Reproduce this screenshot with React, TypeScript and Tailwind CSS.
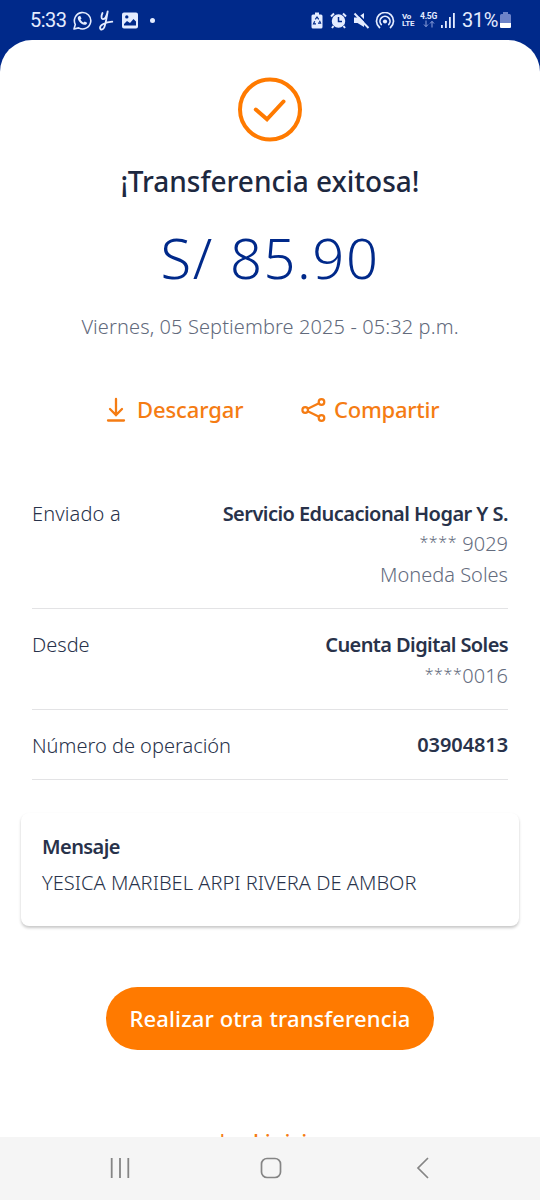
import type { ReactNode } from 'react';

function StatusBar() {
  return (
    <div className="flex h-10 shrink-0 items-center justify-between pl-[30px] pr-[29px] font-['Roboto',sans-serif] text-[#e4ecff]">
      <div className="flex items-center">
        <span className="w-[37px] whitespace-nowrap text-[20px] leading-6 tracking-[-0.5px]">5:33</span>
        <svg className="ml-[6px]" width="19" height="19" viewBox="0 0 19 19" fill="none" stroke="currentColor" strokeWidth="1.6">
          <path d="M1 18l1.3-4.5A8.2 8.2 0 1 1 5.6 16.900L1 18Z" strokeLinejoin="round" />
          <path d="M5.700 5.200l1.500-.4 1.300 2.600-1 1.200c.8 1.500 1.500 2.200 3 3l1.300-1 2.300 1.200c-.2 1.700-1.400 2.300-2.800 2-3.200-.7-6-3.500-6.500-6.400-.1-.8.200-1.700.9-2.200Z" fill="currentColor" stroke="none" />
        </svg>
        <svg className="ml-[6px]" width="16" height="21" viewBox="0 0 16 21" fill="none" stroke="currentColor" strokeWidth="1.800" strokeLinecap="round" strokeLinejoin="round">
          <path d="M4.500 3c-1.200 2.500-1.500 6 .2 6.200 2 .2 4-3.500 5-7.700C8.700 7 8 13 6.200 17.500 5.200 20 2.200 20.200 2 18c-.2-2.700 5-5.800 12.300-6.300" />
        </svg>
        <svg className="ml-[8px]" width="16" height="17" viewBox="0 0 16 17">
          <path fill="currentColor" fillRule="evenodd" d="M2 .5h12a2 2 0 0 1 2 2v12a2 2 0 0 1-2 2H2a2 2 0 0 1-2-2v-12a2 2 0 0 1 2-2Zm2.800 2.700a1.700 1.700 0 1 0 0 3.400 1.700 1.700 0 0 0 0-3.400ZM2 13.500h12v-4L11.500 7 8 11 5 9l-3 3Z" />
        </svg>
        <span className="ml-[12px] size-[5px] rounded-full bg-current" />
      </div>
      <div className="flex items-center">
        <svg width="12" height="17" viewBox="0 0 12 17">
          <path fill="currentColor" d="M4 .5h4v2h2a1.500 1.500 0 0 1 1.500 1.500v11a1.500 1.500 0 0 1-1.500 1.500H2A1.500 1.500 0 0 1 .5 15V4A1.500 1.500 0 0 1 2 2.500h2Z" />
          <path d="M4.300 7.300 6 5l1.700 2.300M8.500 8.800l1 2.300H7M5 11.800H2.500l1.200-2.600" fill="none" stroke="#00298a" strokeWidth="1.200" />
        </svg>
        <svg className="ml-[7px]" width="17" height="17" viewBox="0 0 17 17" fill="none" stroke="currentColor">
          <circle cx="8.500" cy="9" r="6" fill="currentColor" strokeWidth="1.500" />
          <path d="M1 4.500 4 1.500M13 1.500l3 3M3.500 14l-1.500 2M13.500 14l1.500 2" strokeWidth="2" />
          <path d="M8.500 5v4.500h3.500" stroke="#00298a" strokeWidth="1.500" />
        </svg>
        <svg className="ml-[6px]" width="17" height="17" viewBox="0 0 17 17">
          <path d="M1 5.500h3.500L11 1v14L4.500 11H1Z" fill="currentColor" />
          <path d="M3.500 .8 16 13.500" stroke="#00298a" strokeWidth="1.800" />
          <path d="M1.500 1.500 15.500 16" stroke="currentColor" strokeWidth="1.900" />
        </svg>
        <svg className="ml-[5px]" width="20" height="17" viewBox="0 0 20 17" fill="none" stroke="currentColor" strokeWidth="1.700" strokeLinecap="round">
          <path d="M4.500 15.500a8.500 8.500 0 1 1 11 0M6.200 12.500a5 5 0 1 1 7.600 0" />
          <circle cx="10" cy="9.500" r="2.100" fill="currentColor" stroke="none" />
        </svg>
        <div className="ml-[7px] w-[14px] text-[8px] font-bold leading-[7px] tracking-[-0.200px]">
          <div>Vo</div>
          <div>LTE</div>
        </div>
        <div className="ml-[4px] flex w-[17px] flex-col items-center">
          <span className="text-[8.500px] font-bold leading-[8px] tracking-[-0.300px]">4.5G</span>
          <svg width="12" height="8" viewBox="0 0 12 8" fill="none" stroke="#8fa2dc" strokeWidth="1">
            <path d="M3 .5v6M1 4.500l2 2.200 2-2.200M9 7.500v-6M7 3.500l2-2.200 2 2.200" />
          </svg>
        </div>
        <svg className="ml-[4px] mr-px" width="14" height="15" viewBox="0 0 14 15" fill="currentColor">
          <rect x="0" y="12" width="1.800" height="3" />
          <rect x="4" y="8" width="1.800" height="7" />
          <rect x="8" y="4" width="1.800" height="11" />
          <rect x="12" y="0" width="1.800" height="15" />
        </svg>
        <span className="ml-[6px] w-[37px] whitespace-nowrap text-[20px] leading-6 tracking-[-0.400px]">31%</span>
        <svg className="ml-[1px]" width="11" height="16" viewBox="0 0 11 16">
          <path d="M3 0h5v2h1.500A1.500 1.500 0 0 1 11 3.500v11A1.500 1.500 0 0 1 9.500 16h-8A1.500 1.500 0 0 1 0 14.500v-11A1.500 1.500 0 0 1 1.500 2H3Z" fill="#6d83c8" />
          <path d="M0 11h11v3.500A1.500 1.500 0 0 1 9.500 16h-8A1.500 1.500 0 0 1 0 14.500Z" fill="#fff" />
        </svg>
      </div>
    </div>
  );
}

function Row({ label, className, children }: { label: ReactNode; className: string; children: ReactNode }) {
  return (
    <div className={`flex justify-between border-b-[1.500px] border-[#e3e3e5] text-[20px] leading-[31px] text-[#28324a] ${className}`}>
      <span className="whitespace-nowrap font-[350]">{label}</span>
      <div className="flex flex-col items-end whitespace-nowrap">{children}</div>
    </div>
  );
}

function Masked({ digits }: { digits: string }) {
  return (
    <span className="flex h-[31px] whitespace-pre font-light text-[#646c7e]">
      <span className="text-[16px] leading-[28px] tracking-[0.600px]">****</span>
      {digits}
    </span>
  );
}

export default function App() {
  return (
    <div className="flex h-[1200px] w-[540px] flex-col overflow-hidden bg-[#00298a] font-['Noto_Sans',sans-serif]">
      <StatusBar />
      <main className="flex min-h-0 flex-1 flex-col overflow-hidden rounded-t-[32px] bg-white">
        <svg className="mt-[37px] shrink-0 self-center" width="66" height="66" viewBox="0 0 66 66" fill="none" stroke="#ff7a00">
          <circle cx="33" cy="32.500" r="30" strokeWidth="4" />
          <path d="M18.800 32.500 30 42.300 46.500 24.500" strokeWidth="4" strokeLinecap="round" />
        </svg>
        <h1 className="mt-[18px] h-[40px] whitespace-nowrap text-center text-[28px] font-medium leading-[40px] text-[#1d2840]">¡Transferencia exitosa!</h1>
        <p className="mt-[20px] h-[70px] whitespace-nowrap text-center text-[56px] font-[350] leading-[72px] tracking-[1.600px] text-[#00298a]">S/ 85.90</p>
        <p className="mt-[20px] h-[30px] whitespace-nowrap text-center text-[20px] font-[350] leading-[32px] tracking-[0.100px] text-[#626a7c]">Viernes, 05 Septiembre 2025 - 05:32 p.m.</p>

        <div className="mt-[53px] flex h-[32px] shrink-0 items-center pl-[106px] text-[22px] font-medium leading-[32px] text-[#f57c13]">
          <button className="flex w-[195px] items-center">
            <svg width="20" height="26" viewBox="0 0 20 26" fill="none" stroke="currentColor" strokeWidth="2.300" strokeLinecap="round">
              <path d="M10 2v15M4 12l6 6 6-6M2 23.500h16" />
            </svg>
            <span className="-mt-[2px] ml-[11px] tracking-[-0.100px]">Descargar</span>
          </button>
          <button className="flex items-center">
            <svg width="26" height="26" viewBox="0 0 26 26" fill="none" stroke="currentColor" strokeWidth="2.200">
              <circle cx="4.200" cy="13" r="2.800" />
              <circle cx="20.500" cy="5" r="2.800" />
              <circle cx="20.500" cy="21" r="2.800" />
              <path d="M6.800 11.700 18 6.200M6.800 14.300 18 19.800" />
            </svg>
            <span className="-mt-[2px] ml-[7px] tracking-[-0.250px]">Compartir</span>
          </button>
        </div>

        <section className="mt-[72px] px-8">
          <Row label={<span className="tracking-[0.150px]">Enviado a</span>} className="h-[111px]">
            <span className="-mb-px font-semibold tracking-[-0.540px]">Servicio Educacional Hogar Y S.</span>
            <Masked digits=" 9029" />
            <span className="font-light text-[#646c7e]">Moneda Soles</span>
          </Row>
          <Row label="Desde" className="h-[101px] pt-[20px]">
            <span className="font-semibold tracking-[-0.600px]">Cuenta Digital Soles</span>
            <Masked digits="0016" />
          </Row>
          <Row label="Número de operación" className="h-[70px] pt-[20px]">
            <span className="-mt-px font-semibold tracking-[-0.100px]">03904813</span>
          </Row>
        </section>

        <section className="mx-[21px] mt-[33px] h-[113px] shrink-0 rounded-[8px] bg-white pl-[21px] pt-[18px] text-[20px] text-[#28324a] shadow-[0_2px_3px_rgba(0,0,0,0.22)]">
          <h2 className="h-[36px] font-semibold leading-[32px] tracking-[-0.570px]">Mensaje</h2>
          <p className="whitespace-nowrap font-[350] leading-[32px] tracking-[0.030px]">YESICA MARIBEL ARPI RIVERA DE AMBOR</p>
        </section>

        <button className="mt-[61px] h-[63px] w-[328px] shrink-0 self-center whitespace-nowrap rounded-full bg-[#ff7a00] text-[22px] font-medium tracking-[0.120px] text-white">Realizar otra transferencia</button>
        <button className="mt-[75px] h-[32px] shrink-0 self-center whitespace-nowrap text-[22px] font-medium leading-[32px] text-[#f57c13]"><span className="font-['Open_Sans',sans-serif]">I</span>r al inicio</button>
      </main>
      <nav className="flex h-[63px] shrink-0 items-center bg-[#f5f5f5] pb-[2px] pl-[110px] text-[#858585]">
        <svg width="20" height="22" viewBox="0 0 20 22" stroke="currentColor" strokeWidth="1.800">
          <path d="M1.700 1v20M10 1v20M18.300 1v20" />
        </svg>
        <svg className="ml-[130px]" width="22" height="22" viewBox="0 0 22 22" fill="none" stroke="currentColor" strokeWidth="1.700">
          <rect x="1.500" y="1.500" width="19" height="19" rx="5.500" />
        </svg>
        <svg className="ml-[134px]" width="13" height="22" viewBox="0 0 13 22" fill="none" stroke="currentColor" strokeWidth="1.700">
          <path d="M12 1 2 11l10 10" />
        </svg>
      </nav>
    </div>
  );
}
